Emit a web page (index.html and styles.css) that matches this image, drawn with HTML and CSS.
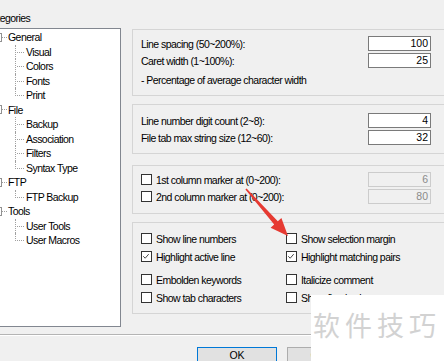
FILE: index.html
```html
<!DOCTYPE html>
<html>
<head>
<meta charset="utf-8">
<link rel="stylesheet" href="styles.css">
</head>
<body>
<div class="dialog">
  <div class="main">
    <div class="left">
      <div class="cat-label">Categories</div>
      <div class="tree">
        <div class="node top"><span class="exp"></span><span class="dots"></span><span>General</span></div>
        <div class="node child"><span class="branch"></span><span>Visual</span></div>
        <div class="node child"><span class="branch"></span><span>Colors</span></div>
        <div class="node child"><span class="branch"></span><span>Fonts</span></div>
        <div class="node child last"><span class="branch"></span><span>Print</span></div>
        <div class="node top"><span class="exp"></span><span class="dots"></span><span>File</span></div>
        <div class="node child"><span class="branch"></span><span>Backup</span></div>
        <div class="node child"><span class="branch"></span><span>Association</span></div>
        <div class="node child"><span class="branch"></span><span>Filters</span></div>
        <div class="node child last"><span class="branch"></span><span>Syntax Type</span></div>
        <div class="node top"><span class="exp"></span><span class="dots"></span><span>FTP</span></div>
        <div class="node child last"><span class="branch"></span><span>FTP Backup</span></div>
        <div class="node top"><span class="exp"></span><span class="dots"></span><span>Tools</span></div>
        <div class="node child"><span class="branch"></span><span>User Tools</span></div>
        <div class="node child last"><span class="branch"></span><span>User Macros</span></div>
      </div>
    </div>
    <div class="right">
      <section class="group g1">
        <div class="row"><span class="lbl">Line spacing (50~200%):</span><span class="edit">100</span></div>
        <div class="row"><span class="lbl">Caret width (1~100%):</span><span class="edit">25</span></div>
        <div class="note">- Percentage of average character width</div>
      </section>
      <section class="group g2">
        <div class="row"><span class="lbl">Line number digit count (2~8):</span><span class="edit">4</span></div>
        <div class="row"><span class="lbl">File tab max string size (12~60):</span><span class="edit">32</span></div>
      </section>
      <section class="group g3">
        <div class="row"><span class="cb"></span><span class="lbl">1st column marker at (0~200):</span><span class="edit disabled">6</span></div>
        <div class="row"><span class="cb"></span><span class="lbl">2nd column marker at (0~200):</span><span class="edit disabled">80</span></div>
      </section>
      <section class="group g4">
        <div class="grid">
          <div class="opt"><span class="cb"></span><span>Show line numbers</span></div>
          <div class="opt"><span class="cb"></span><span>Show selection margin</span></div>
          <div class="opt"><span class="cb checked"><svg viewBox="0 0 11 11" width="9" height="9"><path d="M1.5 5.2 L3.9 7.6 L8.2 2.6" fill="none" stroke="#333" stroke-width="1.1"/></svg></span><span>Highlight active line</span></div>
          <div class="opt"><span class="cb checked"><svg viewBox="0 0 11 11" width="9" height="9"><path d="M1.5 5.2 L3.9 7.6 L8.2 2.6" fill="none" stroke="#333" stroke-width="1.1"/></svg></span><span>Highlight matching pairs</span></div>
        </div>
        <div class="grid second">
          <div class="opt"><span class="cb"></span><span>Embolden keywords</span></div>
          <div class="opt"><span class="cb"></span><span>Italicize comment</span></div>
          <div class="opt"><span class="cb"></span><span>Show tab characters</span></div>
          <div class="opt"><span class="cb"></span><span>Show fixed column</span></div>
        </div>
      </section>
    </div>
  </div>
  <div class="sep"></div>
  <div class="buttons">
    <button class="btn default">OK</button>
    <button class="btn">Cancel</button>
  </div>
</div>
<div class="watermark">软件技巧</div>
<svg class="arrow" width="444" height="361" viewBox="0 0 444 361">
  <polygon points="246.6,188.4 277.8,221.2 281.4,218 288,236 270.6,227.8 274.2,224.6 245.4,189.6" fill="#e63a32"/>
</svg>
</body>
</html>
```

FILE: styles.css
```css
html, body {
  margin: 0;
  padding: 0;
  width: 444px;
  height: 361px;
  overflow: hidden;
  background: #f0f0f0;
}

body {
  position: relative;
  font-family: "Liberation Sans", Arial, sans-serif;
  font-size: 10.5px;
  letter-spacing: -0.55px;
  color: #000;
}

.dialog {
  margin-left: -14px;
  width: 470px;
  padding-top: 11px;
}

.main {
  display: flex;
  align-items: flex-start;
}

.left {
  width: 135px;
  flex: none;
}

.cat-label {
  line-height: 14px;
  height: 14px;
  margin-bottom: 3px;
  margin-left: -1px;
}

.tree {
  box-sizing: border-box;
  height: 299px;
  background: #fff;
  border: 1px solid #828790;
  padding-top: 1px;
}

.node {
  height: 14.5px;
  display: flex;
  align-items: center;
  white-space: nowrap;
}

.node.top {
  padding-left: 6px;
}

.exp {
  box-sizing: border-box;
  width: 9px;
  height: 9px;
  border: 1px solid #919191;
  background: #fff;
  flex: none;
}

.dots {
  width: 5px;
  height: 0;
  border-top: 1px dotted #a0a0a0;
  margin-right: 1px;
  flex: none;
}

.node.child {
  padding-left: 28px;
}

.branch {
  position: relative;
  align-self: stretch;
  width: 9px;
  margin-right: 2px;
  border-left: 1px dotted #a0a0a0;
  box-sizing: border-box;
  flex: none;
}

.branch::after {
  content: "";
  position: absolute;
  left: 1px;
  right: 0;
  top: 7px;
  border-top: 1px dotted #a0a0a0;
}

.node.last .branch {
  align-self: flex-start;
  height: 8px;
}

.right {
  margin-left: 11px;
  margin-top: 18px;
  width: 324px;
  flex: none;
}

.group {
  border: 1px solid #d5d5d5;
  padding: 6px 24px 8px 8px;
}

.g2 {
  margin-top: 8px;
  padding-top: 8px;
}

.g3 {
  margin-top: 11px;
  padding-bottom: 9px;
}

.g4 {
  margin-top: 8px;
  padding-top: 8px;
}

.row {
  display: flex;
  align-items: center;
  height: 15px;
}

.row + .row {
  margin-top: 2px;
}

.lbl {
  flex: 1;
  white-space: nowrap;
}

.note {
  margin-top: 5px;
  line-height: 14px;
  height: 14px;
}

.edit {
  box-sizing: border-box;
  width: 63px;
  height: 15px;
  line-height: 13px;
  border: 1px solid #7a7a7a;
  background: #fff;
  text-align: right;
  padding-right: 2px;
  letter-spacing: 0;
}

.edit.disabled {
  border-color: #cccccc;
  background: #f0f0f0;
  color: #8a8a8a;
}

.cb {
  box-sizing: border-box;
  width: 11px;
  height: 11px;
  border: 1px solid #333;
  background: #fff;
  margin-right: 4px;
  flex: none;
  display: flex;
  align-items: center;
  justify-content: center;
}

.grid {
  display: grid;
  grid-template-columns: 145px 1fr;
  grid-auto-rows: 15px;
  row-gap: 3px;
}

.grid.second {
  margin-top: 8px;
}

.opt {
  display: flex;
  align-items: center;
  white-space: nowrap;
}

.sep {
  margin-top: 7px;
  border-top: 1px solid #b4b4b4;
  border-bottom: 1px solid #ffffff;
}

.buttons {
  display: flex;
  gap: 10px;
  padding-left: 211px;
  margin-top: 11px;
}

.btn {
  box-sizing: border-box;
  width: 80px;
  height: 22px;
  padding: 0;
  margin: 0;
  border: 1px solid #adadad;
  background: #e1e1e1;
  font-family: inherit;
  font-size: 10.5px;
  letter-spacing: 0;
  line-height: 15px;
  display: flex;
  align-items: flex-start;
  justify-content: center;
  color: #000;
}

.btn.default {
  border-color: #0078d7;
}

.watermark {
  position: absolute;
  left: 311px;
  top: 295px;
  right: 0;
  bottom: 0;
  background: #fff;
  font-family: "Noto Sans CJK SC", sans-serif;
  font-size: 27px;
  letter-spacing: 5px;
  line-height: 30px;
  padding-top: 15px;
  padding-left: 2px;
  color: #d2d2d2;
  white-space: nowrap;
  overflow: hidden;
}

.arrow {
  position: absolute;
  left: 0;
  top: 0;
  pointer-events: none;
}
```
